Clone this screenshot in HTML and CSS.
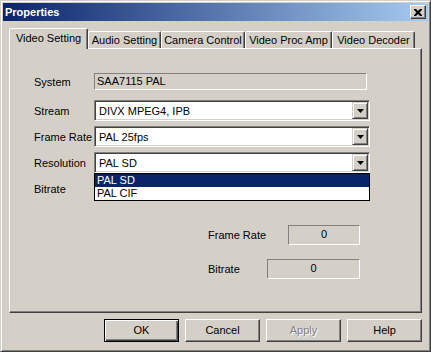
FILE: index.html
```html
<!DOCTYPE html>
<html lang="en">
<head>
  <meta charset="UTF-8" />
  <title>Properties</title>
  <link rel="stylesheet" href="styles.css">
</head>
<body>

  <div class="window">

    <!-- Title bar -->
    <div class="titlebar">
      <span class="title">Properties</span>
      <span class="close-btn">
        <svg width="8" height="7" viewBox="0 0 8 7">
          <path d="M0 0h2l2 2 2-2h2v1l-2.5 2.5 2.5 2.5v1h-2l-2-2-2 2h-2v-1l2.5-2.5-2.5-2.5z" fill="#000"/>
        </svg>
      </span>
    </div>

    <div class="client">

      <!-- Tabs -->
      <div class="tabs">
        <div class="tab active tab-video">Video Setting</div>
        <div class="tab tab-audio">Audio Setting</div>
        <div class="tab tab-camera">Camera Control</div>
        <div class="tab tab-proc">Video Proc Amp</div>
        <div class="tab tab-decoder">Video Decoder</div>
      </div>

      <!-- Tab page -->
      <div class="panel">
        <div class="row row-system">
          <span class="label">System</span>
          <div class="static">SAA7115 PAL</div>
        </div>

        <div class="row row-first">
          <span class="label">Stream</span>
          <div class="combo">
            <span class="combo-text">DIVX MPEG4, IPB</span>
            <span class="drop-btn"><svg width="7" height="4" viewBox="0 0 7 4"><path d="M0 0h7l-3.5 4z" fill="#000"/></svg></span>
          </div>
        </div>

        <div class="row">
          <span class="label">Frame Rate</span>
          <div class="combo">
            <span class="combo-text">PAL 25fps</span>
            <span class="drop-btn"><svg width="7" height="4" viewBox="0 0 7 4"><path d="M0 0h7l-3.5 4z" fill="#000"/></svg></span>
          </div>
        </div>

        <div class="row">
          <span class="label">Resolution</span>
          <div class="combo open">
            <span class="combo-text">PAL SD</span>
            <span class="drop-btn"><svg width="7" height="4" viewBox="0 0 7 4"><path d="M0 0h7l-3.5 4z" fill="#000"/></svg></span>
            <!-- open list -->
            <div class="drop-list">
              <div class="drop-item selected">PAL SD</div>
              <div class="drop-item">PAL CIF</div>
            </div>
          </div>
        </div>

        <div class="row">
          <span class="label">Bitrate</span>
          <div class="combo">
            <span class="combo-text"></span>
            <span class="drop-btn"><svg width="7" height="4" viewBox="0 0 7 4"><path d="M0 0h7l-3.5 4z" fill="#000"/></svg></span>
          </div>
        </div>

        <!-- Status -->
        <div class="stats">
          <div class="stat-row">
            <span>Frame Rate</span>
            <div class="stat-box stat-fps">0</div>
          </div>
          <div class="stat-row stat-second">
            <span>Bitrate</span>
            <div class="stat-box stat-bitrate">0</div>
          </div>
        </div>
      </div>

      <!-- Dialog buttons -->
      <div class="buttons">
        <div class="btn default">OK</div>
        <div class="btn">Cancel</div>
        <div class="btn disabled">Apply</div>
        <div class="btn">Help</div>
      </div>

    </div>
  </div>

</body>
</html>
```

FILE: styles.css
```css
* {
  box-sizing: border-box;
}

body {
  margin: 0;
  font-family: "Liberation Sans", Arial, sans-serif;
  font-size: 11px;
  color: #000;
  background-color: #d4d0c8;
}

.window {
  width: 431px;
  height: 352px;
  background-color: #d4d0c8;
  border: 1px solid;
  border-color: #d4d0c8 #404040 #404040 #d4d0c8;
  box-shadow: inset 1px 1px #fff, inset -1px -1px #808080;
  padding: 2px;
}

.titlebar {
  height: 18px;
  display: flex;
  align-items: center;
  justify-content: space-between;
  padding: 0 2px;
  background: linear-gradient(to right, #0a246a, #a6caf0);
}

.title {
  color: #fff;
  font-weight: bold;
  font-size: 11px;
}

.close-btn {
  width: 16px;
  height: 14px;
  display: flex;
  align-items: center;
  justify-content: center;
  background-color: #d4d0c8;
  border: 1px solid;
  border-color: #fff #404040 #404040 #fff;
  box-shadow: inset -1px -1px #808080;
}

.client {
  padding: 0 6px;
}

/* Tabs */

.tabs {
  display: flex;
  align-items: flex-end;
  height: 20px;
  margin-top: 7px;
}

.tab {
  height: 17px;
  padding-top: 2px;
  line-height: 13px;
  text-align: center;
  white-space: nowrap;
  border: 1px solid;
  border-bottom: none;
  border-color: #fff #404040 transparent #fff;
  border-radius: 2px 2px 0 0;
  box-shadow: inset -1px 0 #808080;
}

.tab.active {
  height: 21px;
  padding-top: 3px;
  margin-bottom: -1px;
  position: relative;
  z-index: 1;
  background-color: #d4d0c8;
}

.tab-video { width: 79px; }
.tab-audio { width: 73px; }
.tab-camera { width: 84px; }
.tab-proc { width: 87px; }
.tab-decoder { width: 83px; }

.panel {
  height: 265px;
  padding: 24px 0 0 24px;
  border: 1px solid;
  border-color: #fff #404040 #404040 #fff;
  box-shadow: inset -1px -1px #808080;
}

.row {
  display: flex;
  align-items: center;
  height: 21px;
  margin-top: 5px;
}

.row-system {
  height: 17px;
  margin-top: 0;
}

.row-first {
  margin-top: 10px;
}

.label {
  width: 60px;
  white-space: nowrap;
}

.static {
  width: 273px;
  height: 17px;
  padding-left: 2px;
  line-height: 15px;
  border: 1px solid;
  border-color: #808080 #fff #fff #808080;
}

/* Combo box */

.combo {
  position: relative;
  width: 276px;
  height: 21px;
  display: flex;
  align-items: center;
  justify-content: space-between;
  background-color: #fff;
  border: 1px solid;
  border-color: #808080 #fff #fff #808080;
  box-shadow: inset 1px 1px #404040, inset -1px -1px #d4d0c8;
  padding: 1px 1px 1px 4px;
}

.drop-btn {
  width: 16px;
  height: 17px;
  display: flex;
  align-items: center;
  justify-content: center;
  background-color: #d4d0c8;
  border: 1px solid;
  border-color: #d4d0c8 #404040 #404040 #d4d0c8;
  box-shadow: inset 1px 1px #fff, inset -1px -1px #808080;
}

.drop-list {
  position: absolute;
  top: 20px;
  left: -1px;
  width: 276px;
  z-index: 2;
  background-color: #fff;
  border: 1px solid #000;
}

.drop-item {
  height: 13px;
  line-height: 13px;
  padding-left: 2px;
}

.drop-item.selected {
  background-color: #0a246a;
  color: #fff;
}

/* Status */

.stats {
  width: 152px;
  margin: 26px 0 0 174px;
}

.stat-row {
  display: flex;
  align-items: center;
  justify-content: space-between;
}

.stat-second {
  margin-top: 14px;
}

.stat-box {
  height: 20px;
  line-height: 17px;
  text-align: center;
  border: 1px solid;
  border-color: #808080 #fff #fff #808080;
}

.stat-fps { width: 72px; }
.stat-bitrate { width: 93px; }

/* Buttons */

.buttons {
  display: flex;
  justify-content: flex-end;
  gap: 6px;
  margin-top: 6px;
}

.btn {
  width: 75px;
  height: 23px;
  line-height: 20px;
  text-align: center;
  border: 1px solid;
  border-color: #fff #404040 #404040 #fff;
  box-shadow: inset -1px -1px #808080;
}

.btn.default {
  border-color: #000;
  box-shadow: inset 1px 1px #fff, inset -1px -1px #404040, inset -2px -2px #808080;
}

.btn.disabled {
  color: #808080;
  text-shadow: 1px 1px #fff;
}
```
